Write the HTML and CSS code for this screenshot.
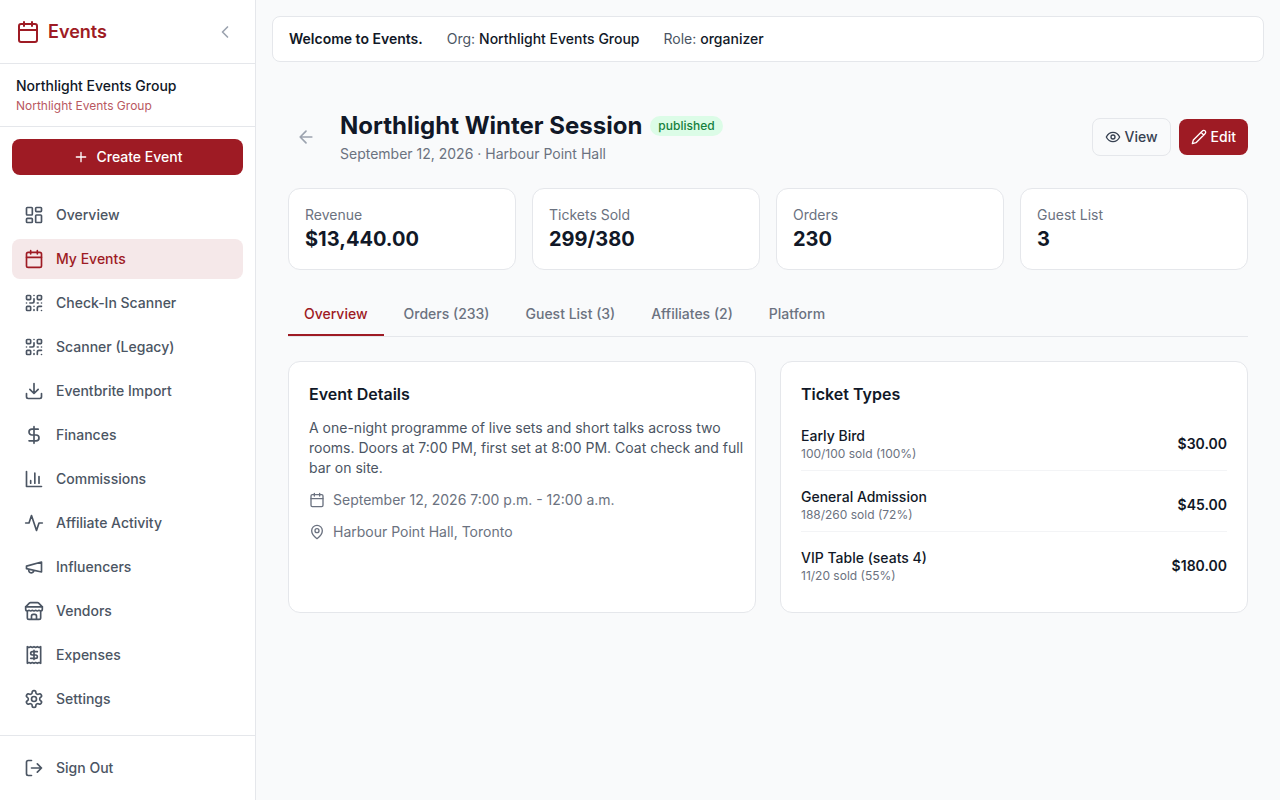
FILE: index.html
```html
<!DOCTYPE html>
<html lang="en">
  <head>
    <meta charset="utf-8" />
    <meta name="viewport" content="width=device-width, initial-scale=1.0" />
    <title>Northlight Winter Session - Events</title>
    <link rel="stylesheet" href="styles.css">
  </head>

  <body>
    <div class="app">
      <aside class="sidebar">
        <div class="sidebar-header">
          <a class="brand" href="#">
            <svg class="icon icon-lg" viewBox="0 0 24 24"><path d="M8 2v4M16 2v4M3 10h18" /><rect x="3" y="4" width="18" height="18" rx="2" /></svg>
            <span>Events</span>
          </a>
          <button class="icon-button collapse" type="button" aria-label="Collapse sidebar">
            <svg class="icon" viewBox="0 0 24 24"><path d="m15 18-6-6 6-6" /></svg>
          </button>
        </div>

        <div class="org">
          <p class="org-name">Northlight Events Group</p>
          <p class="org-sub">Northlight Events Group</p>
        </div>

        <div class="create">
          <button class="button button-primary button-create" type="button">
            <svg class="icon icon-sm" viewBox="0 0 24 24"><path d="M5 12h14M12 5v14" /></svg>
            Create Event
          </button>
        </div>

        <nav class="nav">
          <a class="nav-link" href="#">
            <svg class="icon" viewBox="0 0 24 24"><rect x="3" y="3" width="7" height="9" rx="1" /><rect x="14" y="3" width="7" height="5" rx="1" /><rect x="14" y="12" width="7" height="9" rx="1" /><rect x="3" y="16" width="7" height="5" rx="1" /></svg>
            Overview
          </a>
          <a class="nav-link active" href="#">
            <svg class="icon" viewBox="0 0 24 24"><path d="M8 2v4M16 2v4M3 10h18" /><rect x="3" y="4" width="18" height="18" rx="2" /></svg>
            My Events
          </a>
          <a class="nav-link" href="#">
            <svg class="icon" viewBox="0 0 24 24"><rect x="3" y="3" width="5" height="5" rx="1" /><rect x="16" y="3" width="5" height="5" rx="1" /><rect x="3" y="16" width="5" height="5" rx="1" /><path d="M21 16h-3a2 2 0 0 0-2 2v3M21 21v.01M12 7v3a2 2 0 0 1-2 2H7M3 12h.01M12 3h.01M12 16v.01M16 12h1M21 12v.01M12 21v-1" /></svg>
            Check-In Scanner
          </a>
          <a class="nav-link" href="#">
            <svg class="icon" viewBox="0 0 24 24"><rect x="3" y="3" width="5" height="5" rx="1" /><rect x="16" y="3" width="5" height="5" rx="1" /><rect x="3" y="16" width="5" height="5" rx="1" /><path d="M21 16h-3a2 2 0 0 0-2 2v3M21 21v.01M12 7v3a2 2 0 0 1-2 2H7M3 12h.01M12 3h.01M12 16v.01M16 12h1M21 12v.01M12 21v-1" /></svg>
            Scanner (Legacy)
          </a>
          <a class="nav-link" href="#">
            <svg class="icon" viewBox="0 0 24 24"><path d="M21 15v4a2 2 0 0 1-2 2H5a2 2 0 0 1-2-2v-4M7 10l5 5 5-5M12 15V3" /></svg>
            Eventbrite Import
          </a>
          <a class="nav-link" href="#">
            <svg class="icon" viewBox="0 0 24 24"><path d="M12 2v20M17 5H9.5a3.5 3.5 0 0 0 0 7h5a3.5 3.5 0 0 1 0 7H6" /></svg>
            Finances
          </a>
          <a class="nav-link" href="#">
            <svg class="icon" viewBox="0 0 24 24"><path d="M3 3v18h18M18 17V9M13 17V5M8 17v-3" /></svg>
            Commissions
          </a>
          <a class="nav-link" href="#">
            <svg class="icon" viewBox="0 0 24 24"><path d="M22 12h-4l-3 9L9 3l-3 9H2" /></svg>
            Affiliate Activity
          </a>
          <a class="nav-link" href="#">
            <svg class="icon" viewBox="0 0 24 24"><path d="m3 11 18-5v12L3 14v-3zM11.6 16.8a3 3 0 1 1-5.8-1.6" /></svg>
            Influencers
          </a>
          <a class="nav-link" href="#">
            <svg class="icon" viewBox="0 0 24 24"><path d="m2 7 4.41-4.41A2 2 0 0 1 7.83 2h8.34a2 2 0 0 1 1.42.59L22 7M4 12v8a2 2 0 0 0 2 2h12a2 2 0 0 0 2-2v-8M15 22v-4a2 2 0 0 0-2-2h-2a2 2 0 0 0-2 2v4M2 7h20" /><path d="M22 7v3a2 2 0 0 1-2 2 2.7 2.7 0 0 1-1.59-.63.7.7 0 0 0-.82 0A2.7 2.7 0 0 1 16 12a2.7 2.7 0 0 1-1.59-.63.7.7 0 0 0-.82 0A2.7 2.7 0 0 1 12 12a2.7 2.7 0 0 1-1.59-.63.7.7 0 0 0-.82 0A2.7 2.7 0 0 1 8 12a2.7 2.7 0 0 1-1.59-.63.7.7 0 0 0-.82 0A2.7 2.7 0 0 1 4 12a2 2 0 0 1-2-2V7" /></svg>
            Vendors
          </a>
          <a class="nav-link" href="#">
            <svg class="icon" viewBox="0 0 24 24"><path d="M4 2v20l2-1 2 1 2-1 2 1 2-1 2 1 2-1 2 1V2l-2 1-2-1-2 1-2-1-2 1-2-1-2 1ZM16 8h-6a2 2 0 1 0 0 4h4a2 2 0 1 1 0 4H8M12 17.5v-11" /></svg>
            Expenses
          </a>
          <a class="nav-link" href="#">
            <svg class="icon" viewBox="0 0 24 24"><path d="M12.22 2h-.44a2 2 0 0 0-2 2v.18a2 2 0 0 1-1 1.73l-.43.25a2 2 0 0 1-2 0l-.15-.08a2 2 0 0 0-2.73.73l-.22.38a2 2 0 0 0 .73 2.73l.15.1a2 2 0 0 1 1 1.72v.51a2 2 0 0 1-1 1.74l-.15.09a2 2 0 0 0-.73 2.73l.22.38a2 2 0 0 0 2.73.73l.15-.08a2 2 0 0 1 2 0l.43.25a2 2 0 0 1 1 1.73V20a2 2 0 0 0 2 2h.44a2 2 0 0 0 2-2v-.18a2 2 0 0 1 1-1.73l.43-.25a2 2 0 0 1 2 0l.15.08a2 2 0 0 0 2.73-.73l.22-.39a2 2 0 0 0-.73-2.73l-.15-.08a2 2 0 0 1-1-1.74v-.5a2 2 0 0 1 1-1.74l.15-.09a2 2 0 0 0 .73-2.73l-.22-.38a2 2 0 0 0-2.73-.73l-.15.08a2 2 0 0 1-2 0l-.43-.25a2 2 0 0 1-1-1.73V4a2 2 0 0 0-2-2z" /><circle cx="12" cy="12" r="3" /></svg>
            Settings
          </a>
        </nav>

        <div class="sidebar-footer">
          <button class="nav-link" type="button">
            <svg class="icon" viewBox="0 0 24 24"><path d="M9 21H5a2 2 0 0 1-2-2V5a2 2 0 0 1 2-2h4M16 17l5-5-5-5M21 12H9" /></svg>
            Sign Out
          </button>
        </div>
      </aside>

      <main class="main">
        <div class="welcome">
          <strong>Welcome to Events.</strong>
          <span>Org: <b>Northlight Events Group</b></span>
          <span>Role: <b>organizer</b></span>
        </div>

        <div class="content">
          <header class="event-header">
            <button class="icon-button back" type="button" aria-label="Back">
              <svg class="icon" viewBox="0 0 24 24"><path d="m12 19-7-7 7-7M19 12H5" /></svg>
            </button>
            <div class="event-heading">
              <div class="event-title">
                <h1>Northlight Winter Session</h1>
                <span class="badge">published</span>
              </div>
              <p class="event-meta">September 12, 2026 · Harbour Point Hall</p>
            </div>
            <div class="actions">
              <button class="button button-outline" type="button">
                <svg class="icon icon-sm" viewBox="0 0 24 24"><path d="M2 12s3.5-7 10-7 10 7 10 7-3.5 7-10 7-10-7-10-7Z" /><circle cx="12" cy="12" r="3" /></svg>
                View
              </button>
              <button class="button button-primary" type="button">
                <svg class="icon icon-sm" viewBox="0 0 24 24"><path d="M17 3a2.85 2.83 0 1 1 4 4L7.5 20.5 2 22l1.5-5.5ZM15 5l4 4" /></svg>
                Edit
              </button>
            </div>
          </header>

          <section class="stats">
            <div class="card stat">
              <p class="stat-label">Revenue</p>
              <p class="stat-value">$13,440.00</p>
            </div>
            <div class="card stat">
              <p class="stat-label">Tickets Sold</p>
              <p class="stat-value">299/380</p>
            </div>
            <div class="card stat">
              <p class="stat-label">Orders</p>
              <p class="stat-value">230</p>
            </div>
            <div class="card stat">
              <p class="stat-label">Guest List</p>
              <p class="stat-value">3</p>
            </div>
          </section>

          <div class="tabs" role="tablist">
            <button class="tab active" type="button" role="tab" aria-selected="true">Overview</button>
            <button class="tab" type="button" role="tab">Orders (233)</button>
            <button class="tab" type="button" role="tab">Guest List (3)</button>
            <button class="tab" type="button" role="tab">Affiliates (2)</button>
            <button class="tab" type="button" role="tab">Platform</button>
          </div>

          <div class="panels">
            <section class="card panel">
              <h2>Event Details</h2>
              <p class="description">A one-night programme of live sets and short talks across two rooms. Doors at 7:00 PM, first set at 8:00 PM. Coat check and full bar on site.</p>
              <p class="detail">
                <svg class="icon icon-sm" viewBox="0 0 24 24"><path d="M8 2v4M16 2v4M3 10h18" /><rect x="3" y="4" width="18" height="18" rx="2" /></svg>
                September 12, 2026 7:00 p.m. - 12:00 a.m.
              </p>
              <p class="detail">
                <svg class="icon icon-sm" viewBox="0 0 24 24"><path d="M20 10c0 6-8 12-8 12s-8-6-8-12a8 8 0 0 1 16 0Z" /><circle cx="12" cy="10" r="3" /></svg>
                Harbour Point Hall, Toronto
              </p>
            </section>

            <section class="card panel">
              <h2>Ticket Types</h2>
              <ul class="tickets">
                <li class="ticket">
                  <div>
                    <p class="ticket-name">Early Bird</p>
                    <p class="ticket-sold">100/100 sold (100%)</p>
                  </div>
                  <span class="ticket-price">$30.00</span>
                </li>
                <li class="ticket">
                  <div>
                    <p class="ticket-name">General Admission</p>
                    <p class="ticket-sold">188/260 sold (72%)</p>
                  </div>
                  <span class="ticket-price">$45.00</span>
                </li>
                <li class="ticket">
                  <div>
                    <p class="ticket-name">VIP Table (seats 4)</p>
                    <p class="ticket-sold">11/20 sold (55%)</p>
                  </div>
                  <span class="ticket-price">$180.00</span>
                </li>
              </ul>
            </section>
          </div>
        </div>
      </main>
    </div>
  </body>
</html>
```

FILE: styles.css
```css
* {
  box-sizing: border-box;
}

body {
  margin: 0;
  font-family: Inter, "Liberation Sans", sans-serif;
  font-size: 14px;
  line-height: 20px;
  color: #111827;
  background-color: #f9fafb;
}

h1,
h2,
p,
ul {
  margin: 0;
  padding: 0;
}

a {
  color: inherit;
  text-decoration: none;
}

button {
  margin: 0;
  border: 0;
  background: none;
  font: inherit;
  color: inherit;
  cursor: pointer;
}

.icon {
  flex: none;
  display: block;
  width: 20px;
  height: 20px;
  fill: none;
  stroke: currentColor;
  stroke-width: 2;
  stroke-linecap: round;
  stroke-linejoin: round;
}

.icon-sm {
  width: 16px;
  height: 16px;
}

.icon-lg {
  width: 24px;
  height: 24px;
}

.app {
  display: flex;
  min-height: 100vh;
}

/* sidebar */
.sidebar {
  position: sticky;
  top: 0;
  flex: none;
  display: flex;
  flex-direction: column;
  width: 256px;
  height: 100vh;
  background-color: #fff;
  border-right: 1px solid #e5e7eb;
}

.sidebar-header {
  display: flex;
  align-items: center;
  justify-content: space-between;
  height: 64px;
  padding: 0 16px;
  border-bottom: 1px solid #e5e7eb;
}

.brand {
  display: flex;
  align-items: center;
  gap: 8px;
  font-size: 18px;
  line-height: 28px;
  font-weight: 600;
  color: #9e1b24;
}

.icon-button {
  padding: 8px;
  color: #9ca3af;
}

.collapse {
  padding: 4px;
}

.org {
  padding: 12px 16px;
  border-bottom: 1px solid #e5e7eb;
}

.org-name {
  font-weight: 500;
}

.org-sub {
  margin-top: 2px;
  font-size: 12px;
  line-height: 16px;
  color: #b9585f;
}

.create {
  padding: 12px 12px 8px;
}

.button {
  display: flex;
  align-items: center;
  justify-content: center;
  gap: 4px;
  padding: 8px 12px;
  border-radius: 8px;
  font-weight: 500;
}

.button-primary {
  color: #fff;
  background-color: #9e1b24;
}

.button-outline {
  color: #374151;
  border: 1px solid #e5e7eb;
}

.button-create {
  gap: 8px;
  width: 100%;
}

.nav {
  flex: 1;
  display: flex;
  flex-direction: column;
  gap: 4px;
  padding: 12px;
  overflow: hidden;
}

.nav-link {
  display: flex;
  align-items: center;
  gap: 12px;
  width: 100%;
  padding: 10px 12px;
  border-radius: 8px;
  font-weight: 500;
  color: #4b5563;
}

.nav-link.active {
  color: #9e1b24;
  background-color: #f5e8e9;
}

.sidebar-footer {
  padding: 12px;
  border-top: 1px solid #e5e7eb;
}

/* main column */
.main {
  flex: 1;
  min-width: 0;
  padding: 16px;
}

.welcome {
  display: flex;
  gap: 24px;
  padding: 12px 16px;
  background-color: #fff;
  border: 1px solid #e5e7eb;
  border-radius: 8px;
  color: #4b5563;
}

.welcome strong {
  font-weight: 600;
  color: #111827;
}

.welcome b {
  font-weight: 500;
  color: #111827;
}

.content {
  display: flex;
  flex-direction: column;
  gap: 24px;
  padding: 48px 16px 16px;
}

.event-header {
  display: flex;
  align-items: center;
  gap: 16px;
}

.event-heading {
  flex: 1;
}

.event-title {
  display: flex;
  align-items: center;
  gap: 8px;
}

h1 {
  font-size: 24px;
  line-height: 32px;
  font-weight: 700;
}

.badge {
  padding: 2px 8px;
  border-radius: 10px;
  font-size: 12px;
  line-height: 16px;
  font-weight: 500;
  color: #15803d;
  background-color: #dcfce7;
}

.event-meta {
  margin-top: 2px;
  color: #6b7280;
}

.actions {
  display: flex;
  align-items: center;
  gap: 8px;
}

.card {
  background-color: #fff;
  border: 1px solid #e5e7eb;
  border-radius: 12px;
}

.stats {
  display: grid;
  grid-template-columns: repeat(4, 1fr);
  gap: 16px;
}

.stat {
  padding: 16px;
}

.stat-label {
  color: #6b7280;
}

.stat-value {
  font-size: 20px;
  line-height: 28px;
  font-weight: 700;
}

.tabs {
  display: flex;
  gap: 4px;
  border-bottom: 1px solid #e5e7eb;
}

.tab {
  padding: 10px 16px;
  border-bottom: 2px solid transparent;
  font-weight: 500;
  color: #6b7280;
}

.tab.active {
  color: #9e1b24;
  border-bottom-color: #9e1b24;
}

.panels {
  display: grid;
  grid-template-columns: 1fr 1fr;
  gap: 24px;
}

.panel {
  display: flex;
  flex-direction: column;
  gap: 12px;
  padding: 20px;
}

h2 {
  font-size: 16px;
  line-height: 24px;
  font-weight: 600;
}

/* long text may run a little into the panel padding */
.description {
  margin-right: -12px;
  color: #4b5563;
}

.detail {
  display: flex;
  align-items: center;
  gap: 8px;
  color: #6b7280;
}

.tickets {
  display: flex;
  flex-direction: column;
  gap: 8px;
  list-style: none;
}

.ticket {
  display: flex;
  align-items: center;
  justify-content: space-between;
  padding: 8px 0;
  border-bottom: 1px solid #f3f4f6;
}

.ticket:last-child {
  border-bottom: 0;
}

.ticket-name {
  font-weight: 500;
}

.ticket-sold {
  font-size: 12px;
  line-height: 16px;
  color: #6b7280;
}

.ticket-price {
  font-weight: 600;
}
```
